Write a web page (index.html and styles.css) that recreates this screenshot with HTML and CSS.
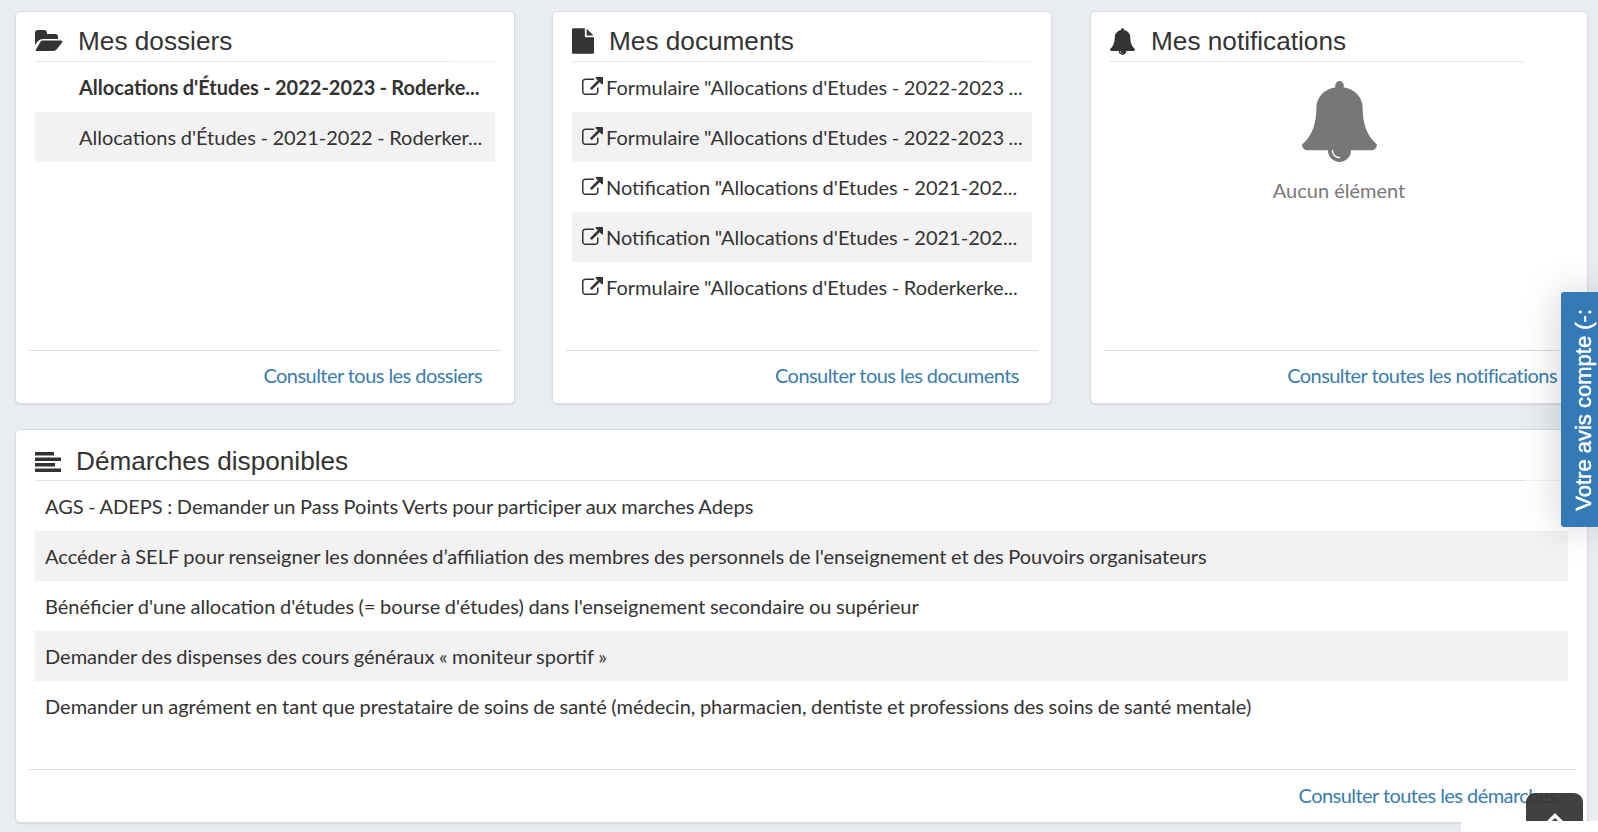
FILE: index.html
```html
<!DOCTYPE html>
<html lang="fr">
<head>
    <meta charset="UTF-8">
    <meta name="viewport" content="width=device-width, initial-scale=1.0">
    <title>Mon espace</title>
    <link rel="stylesheet" href="styles.css">
</head>
<body>

<svg class="icon-defs" width="0" height="0" aria-hidden="true">
    <symbol id="ext" viewBox="0 0 1792 1536">
        <path d="M1408 928v320q0 119-84.5 203.5t-203.5 84.5h-832q-119 0-203.5-84.5t-84.5-203.5v-832q0-119 84.5-203.5t203.5-84.5h704q14 0 23 9t9 23v64q0 14-9 23t-23 9h-704q-66 0-113 47t-47 113v832q0 66 47 113t113 47h832q66 0 113-47t47-113v-320q0-14 9-23t23-9h64q14 0 23 9t9 23zm384-864v512q0 26-19 45t-45 19-45-19l-176-176-652 652q-10 10-23 10t-23-10l-114-114q-10-10-10-23t10-23l652-652-176-176q-19-19-19-45t19-45 45-19h512q26 0 45 19t19 45z"/>
    </symbol>
    <symbol id="bell" viewBox="64 0 1664 1792">
        <path d="M912 1696q0-16-16-16-59 0-101.5-42.5t-42.5-101.5q0-16-16-16t-16 16q0 73 51.5 124.5t124.5 51.5q16 0 16-16zm816-288q0 52-38 90t-90 38h-448q0 106-75 181t-181 75-181-75-75-181h-448q-52 0-90-38t-38-90q50-42 91-88t85-119.5 74.5-158.5 50-206 19.5-260q0-152 117-282.5t307-158.5q-8-19-8-39 0-40 28-68t68-28 68 28 28 68q0 20-8 39 190 28 307 158.5t117 282.5q0 139 19.5 260t50 206 74.5 158.5 85 119.5 91 88z"/>
    </symbol>
</svg>

<div class="page">
    <div class="top-row">
        <section class="card">
            <div class="card-main">
                <h3 class="card-title">
                    <svg class="title-icon icon-folder" viewBox="0 0 28 22"><path d="M0 3a3 3 0 0 1 3-3h6a3 3 0 0 1 3 3v1h8a3 3 0 0 1 3 3v2H8q-3 0-5 2l-3 4z"/><path d="M7.5 10.5H26q2 0 1.5 1.5L22 19q-1.5 2-4 2H2q-2 0-1-1.5L5 12.5q1-2 2.5-2z"/></svg>
                    Mes dossiers
                </h3>
                <ul class="list list-folders">
                    <li class="unread">Allocations d'Études - 2022-2023 - Roderke...</li>
                    <li>Allocations d'Études - 2021-2022 - Roderker...</li>
                </ul>
            </div>
            <div class="card-foot"><a href="#">Consulter tous les dossiers</a></div>
        </section>

        <section class="card">
            <div class="card-main">
                <h3 class="card-title">
                    <svg class="title-icon icon-file" viewBox="128 0 1536 1792"><path d="M1152 512v-472q22 14 36 28l408 408q14 14 28 36h-472zm-128 32q0 40 28 68t68 28h544v1056q0 40-28 68t-68 28h-1344q-40 0-68-28t-28-68v-1600q0-40 28-68t68-28h800v544z"/></svg>
                    Mes documents
                </h3>
                <ul class="list">
                    <li><svg class="ext-icon"><use href="#ext"/></svg>Formulaire "Allocations d'Etudes - 2022-2023 ...</li>
                    <li><svg class="ext-icon"><use href="#ext"/></svg>Formulaire "Allocations d'Etudes - 2022-2023 ...</li>
                    <li><svg class="ext-icon"><use href="#ext"/></svg>Notification "Allocations d'Etudes - 2021-202...</li>
                    <li><svg class="ext-icon"><use href="#ext"/></svg>Notification "Allocations d'Etudes - 2021-202...</li>
                    <li><svg class="ext-icon"><use href="#ext"/></svg>Formulaire "Allocations d'Etudes - Roderkerke...</li>
                </ul>
            </div>
            <div class="card-foot"><a href="#">Consulter tous les documents</a></div>
        </section>

        <section class="card card-notif">
            <div class="card-main">
                <h3 class="card-title">
                    <svg class="title-icon icon-bell"><use href="#bell"/></svg>
                    Mes notifications
                </h3>
                <div class="empty">
                    <svg class="empty-bell"><use href="#bell"/></svg>
                    <p>Aucun élément</p>
                </div>
            </div>
            <div class="card-foot"><a href="#">Consulter toutes les notifications</a></div>
        </section>
    </div>

    <section class="card card-wide">
        <div class="card-main">
            <h3 class="card-title">
                <svg class="title-icon icon-lines" viewBox="0 0 26 20"><rect width="19" height="3.5"/><rect y="5.5" width="26" height="3.5"/><rect y="11" width="20" height="3.5"/><rect y="16.5" width="26" height="3.5"/></svg>
                Démarches disponibles
            </h3>
            <ul class="list">
                <li>AGS - ADEPS : Demander un Pass Points Verts pour participer aux marches Adeps</li>
                <li>Accéder à SELF pour renseigner les données d’affiliation des membres des personnels de l'enseignement et des Pouvoirs organisateurs</li>
                <li>Bénéficier d'une allocation d'études (= bourse d'études) dans l'enseignement secondaire ou supérieur</li>
                <li>Demander des dispenses des cours généraux « moniteur sportif »</li>
                <li>Demander un agrément en tant que prestataire de soins de santé (médecin, pharmacien, dentiste et professions des soins de santé mentale)</li>
            </ul>
        </div>
        <div class="card-foot"><a href="#">Consulter toutes les démarches</a></div>
    </section>
</div>

<a class="feedback" href="#"><span>Votre avis compte (-:</span></a>
<a class="to-top" href="#">
    <svg viewBox="0 0 20 12" width="20" height="12"><path d="M10 0l10 10-2.5 2L10 5l-7.5 7L0 10z"/></svg>
</a>
<div class="bottom-mask"></div>

</body>
</html>
```

FILE: styles.css
```css
html, body {
    height: 100%;
}
body {
    font-family: "Lato", sans-serif;
    font-size: 20px;
    margin: 0;
    background-color: #e9edf2;
    color: #333;
    overflow: hidden;
}
.icon-defs {
    position: absolute;
}
.page {
    padding: 11px 10px 0 15px;
}
.top-row {
    display: grid;
    grid-template-columns: 500px 500px 499px;
    column-gap: 37px;
    margin-bottom: 25px;
}
.card {
    box-sizing: border-box;
    height: 393px;
    display: flex;
    flex-direction: column;
    padding: 0 14px;
    background-color: white;
    border: 1px solid #d9dde2;
    border-radius: 5px;
    box-shadow: 0 1px 2px rgba(0, 0, 0, 0.08);
}
.card-notif {
    margin-left: 1px;
}
.card-wide {
    height: 394px;
}
.card-main {
    flex: 1;
    padding: 0 5px;
}
.card-title {
    position: relative;
    display: flex;
    align-items: center;
    box-sizing: border-box;
    height: 50px;
    margin: 0 44px 0 0;
    padding-top: 9px;
    font-family: "Liberation Sans", Arial, sans-serif;
    font-size: 26.2px;
    font-weight: normal;
    border-bottom: 1px solid #e2e4e7;
    white-space: nowrap;
}
.card-wide .card-title {
    height: 51px;
    padding-top: 13px;
}
.title-icon {
    flex: none;
    fill: #333;
}
.icon-folder {
    width: 28px;
    height: 22px;
    margin-right: 15px;
}
.icon-file {
    width: 22px;
    height: 26px;
    margin-right: 15px;
}
.icon-bell {
    width: 25px;
    height: 27px;
    margin-right: 16px;
}
.icon-lines {
    width: 26px;
    height: 20px;
    margin-right: 15px;
}
.list {
    list-style: none;
    margin: -1px 0 0;
    padding: 0;
    border-top: 1px solid #f2f2f2;
    word-spacing: -0.55px;
}
.list li {
    height: 50px;
    line-height: 51px;
    padding-left: 10px;
    white-space: nowrap;
    overflow: hidden;
}
.list li:nth-child(even) {
    background-color: #f2f2f2;
}
.list-folders li {
    padding-left: 44px;
}
.unread {
    font-weight: bold;
}
.ext-icon {
    width: 21px;
    height: 18px;
    margin-right: 3px;
    fill: #333;
}
.empty {
    text-align: center;
    color: #777;
    padding-top: 19px;
}
.empty p {
    margin: 16px 0 0;
}
.empty-bell {
    display: block;
    width: 75px;
    height: 81px;
    margin: 0 auto;
    fill: #777;
}
.card-foot {
    height: 52px;
    line-height: 49px;
    margin: 0 -1px;
    padding-right: 19px;
    text-align: right;
    border-top: 1px solid #dcdee1;
}
.card-notif .card-foot {
    padding-right: 17px;
}
.card-wide .card-foot {
    line-height: 50px;
    margin-right: -3px;
}
.card-foot a {
    color: #3a7cab;
    text-decoration: none;
    letter-spacing: -0.55px;
}
.feedback {
    position: fixed;
    top: 292px;
    right: 0;
    box-sizing: border-box;
    width: 37px;
    height: 235px;
    padding-left: 8px;
    display: flex;
    align-items: center;
    justify-content: center;
    background-color: #337ab7;
    border-radius: 3px 0 0 3px;
    box-shadow: 0 0 40px rgba(0, 0, 0, 0.2);
    color: white;
    font-family: "Liberation Sans", Arial, sans-serif;
    font-size: 22px;
    -webkit-text-stroke: 0.5px white;
    text-decoration: none;
}
.feedback span {
    writing-mode: vertical-rl;
    transform: rotate(180deg);
    white-space: nowrap;
}
.to-top {
    position: fixed;
    left: 1526px;
    top: 793px;
    width: 57px;
    height: 39px;
    display: flex;
    justify-content: center;
    padding-top: 20px;
    box-sizing: border-box;
    background-color: #333;
    opacity: 0.93;
    border-radius: 9px 9px 0 0;
    fill: white;
}
.bottom-mask {
    position: fixed;
    left: 1461px;
    right: 0;
    top: 821px;
    bottom: 0;
    background-color: white;
}
```
